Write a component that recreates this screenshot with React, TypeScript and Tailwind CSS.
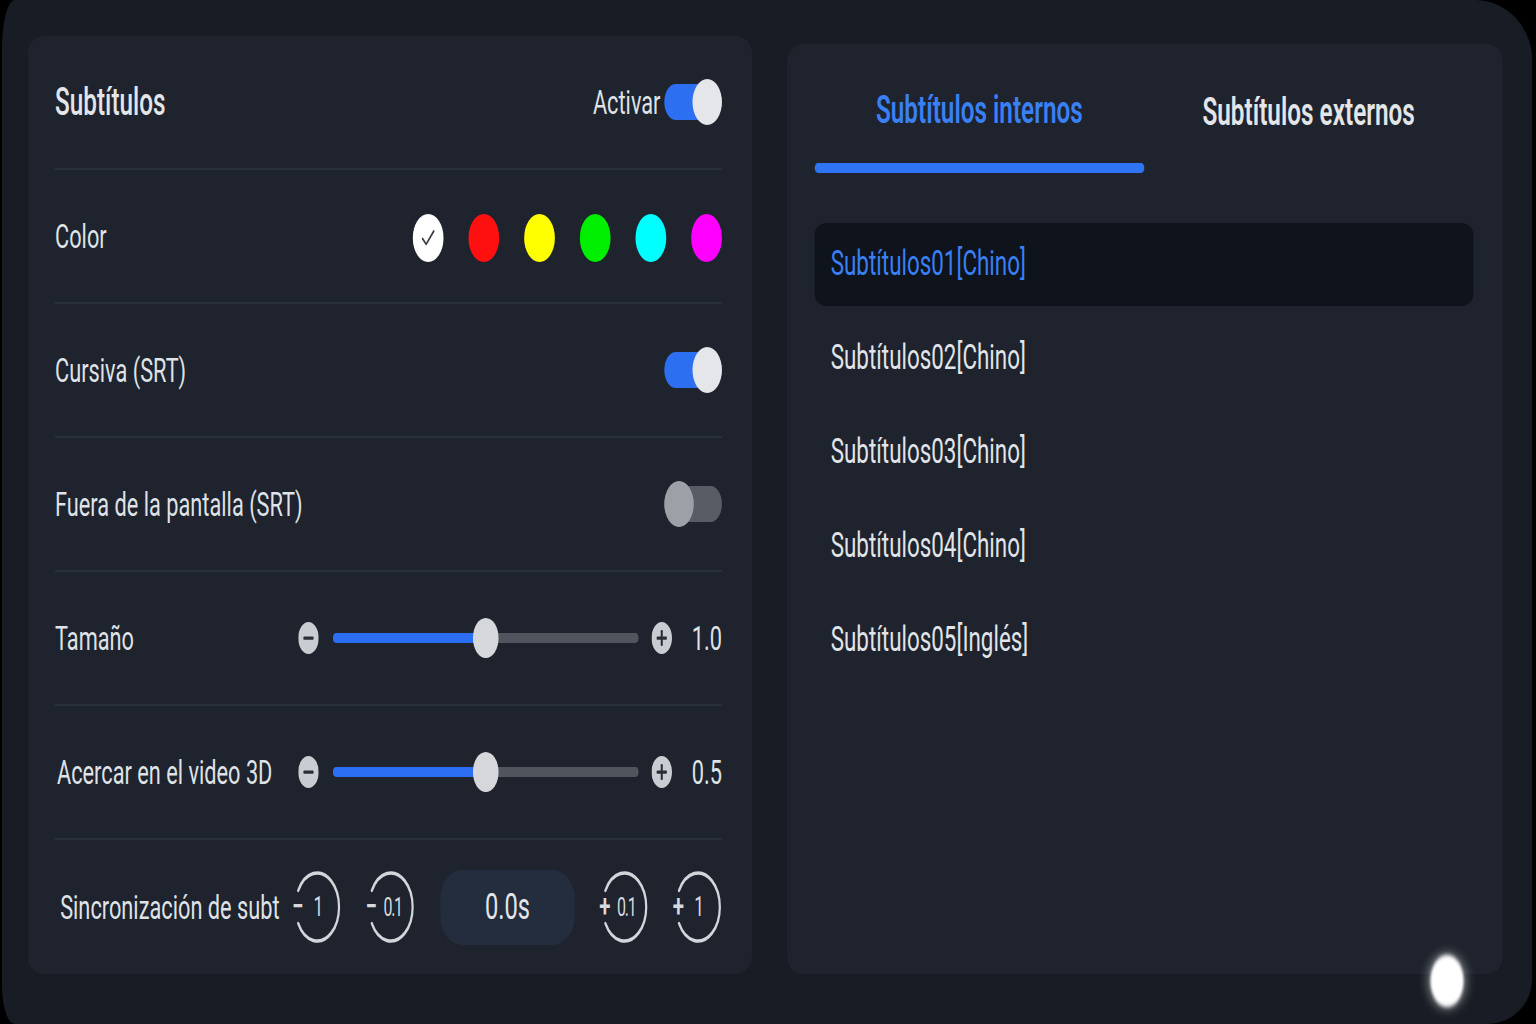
import React from "react";

// The reference is a stereo (VR) capture squeezed horizontally to ~64%.
// The page is laid out at 2400px wide and scaled on the x axis to fit 1536px.

const Toggle: React.FC<{ on: boolean }> = ({ on }) => {
  return (
    <div className="relative w-[90px] h-[46px] flex items-center">
      <div
        className={
          on
            ? "w-full h-[36px] rounded-full bg-[#2c6ff0]"
            : "w-full h-[36px] rounded-full bg-[#585c64]"
        }
      />
      <div
        className={
          on
            ? "absolute right-0 top-0 w-[46px] h-[46px] rounded-full bg-[#e4e6ea]"
            : "absolute left-0 top-0 w-[46px] h-[46px] rounded-full bg-[#9da1a7]"
        }
      />
    </div>
  );
};

const RoundIcon: React.FC<{ plus?: boolean }> = ({ plus }) => {
  return (
    <svg width="32" height="32" viewBox="0 0 32 32">
      <circle cx="16" cy="16" r="16" fill="#c9ccd1" />
      <rect x="8" y="14.5" width="16" height="3.2" rx="1.2" fill="#2a2e36" />
      {plus && <rect x="14.4" y="8" width="3.2" height="16" rx="1.2" fill="#2a2e36" />}
    </svg>
  );
};

const Slider: React.FC<{ value: string }> = ({ value }) => {
  return (
    <div className="flex items-center">
      <RoundIcon />
      <div className="relative ml-[22px] w-[478px] h-[40px] flex items-center">
        <div className="flex w-full h-[10px] rounded-full overflow-hidden">
          <div className="w-[239px] bg-[#2b6ef2]" />
          <div className="flex-1 bg-[#50545c]" />
        </div>
        <div className="absolute left-[219px] top-0 w-[40px] h-[40px] rounded-full bg-[#d5d7db]" />
      </div>
      <div className="ml-[20px]">
        <RoundIcon plus />
      </div>
      <span className="ml-[31px] text-[34px] text-[#dfe2e6] leading-none">{value}</span>
    </div>
  );
};

const StepButton: React.FC<{ sign: string; num: string }> = ({ sign, num }) => {
  const small = num.length > 1;
  return (
    <button className="relative w-[75px] h-[74px] flex items-center justify-center text-[#d6d9de]">
      <svg className="absolute inset-0" width="75" height="74" viewBox="0 0 74 74">
        <path
          d="M7.5 20.5 A34 34 0 1 1 7.5 53.5"
          fill="none"
          stroke="#d2d5da"
          strokeWidth="3.5"
          strokeLinecap="round"
        />
      </svg>
      <span className="absolute left-[-4px] top-[19px] w-[22px] text-center text-[32px] leading-[34px] font-semibold">
        {sign}
      </span>
      <span
        className={
          small
            ? "relative ml-[6px] text-[25px] leading-none tracking-[-2px]"
            : "relative ml-[4px] text-[27px] leading-none"
        }
      >
        {num}
      </span>
    </button>
  );
};

const colors = ["#ffffff", "#ff1010", "#ffff00", "#00ee00", "#00ffff", "#ff00ff"];

const subtitles = [
  "Subtítulos01[Chino]",
  "Subtítulos02[Chino]",
  "Subtítulos03[Chino]",
  "Subtítulos04[Chino]",
  "Subtítulos05[Inglés]",
];

const Row: React.FC<{ children: React.ReactNode; last?: boolean }> = ({ children, last }) => {
  return (
    <div
      className={
        last
          ? "flex items-center justify-between h-[134px]"
          : "flex items-center justify-between h-[134px] border-b-2 border-[#2a303b]"
      }
    >
      {children}
    </div>
  );
};

const App: React.FC = () => {
  return (
    <div className="w-[1536px] h-[1024px] overflow-hidden bg-black font-['Roboto','Noto_Sans',sans-serif]">
      <div className="w-[2400px] h-[1024px] origin-top-left scale-x-[0.64]">
        <div className="relative ml-[3px] w-[2391px] h-[1024px] bg-[#181c24] rounded-tl-[20px_50px] rounded-tr-[90px_60px] rounded-br-[70px_45px] rounded-bl-[20px_40px] flex items-start gap-[55px] pl-[41px] pt-[36px]">
          {/* left settings panel */}
          <div className="w-[1131px] h-[938px] rounded-[26px/16px] bg-[#1e232d] pl-[42px] pr-[47px]">
            <Row>
              <span className="text-[38px] font-medium text-[#e3e5e9]">Subtítulos</span>
              <div className="flex items-center gap-[6px]">
                <span className="text-[34px] text-[#dfe2e6]">Activar</span>
                <Toggle on />
              </div>
            </Row>
            <Row>
              <span className="text-[34px] text-[#dfe2e6]">Color</span>
              <div className="flex items-center gap-[39px] pt-[3px]">
                {colors.map((c, i) => (
                  <div
                    key={c}
                    className="w-[48px] h-[48px] rounded-full flex items-center justify-center"
                    style={{ backgroundColor: c }}
                  >
                    {i === 0 && (
                      <svg width="30" height="30" viewBox="0 0 24 24" fill="none">
                        <path d="M5 12.5l4.5 4.5L19 6.5" stroke="#3a3f48" strokeWidth="1.8" strokeLinecap="round" strokeLinejoin="round" />
                      </svg>
                    )}
                  </div>
                ))}
              </div>
            </Row>
            <Row>
              <span className="text-[34px] text-[#dfe2e6]">Cursiva (SRT)</span>
              <Toggle on />
            </Row>
            <Row>
              <span className="text-[34px] text-[#dfe2e6]">Fuera de la pantalla (SRT)</span>
              <Toggle on={false} />
            </Row>
            <Row>
              <span className="text-[34px] text-[#dfe2e6]">Tamaño</span>
              <Slider value="1.0" />
            </Row>
            <Row>
              <span className="text-[34px] text-[#dfe2e6] pl-[3px]">Acercar en el video 3D</span>
              <Slider value="0.5" />
            </Row>
            <Row last>
              <span className="text-[34px] text-[#dfe2e6] whitespace-nowrap pl-[8px]">Sincronización de subt</span>
              <div className="flex items-center gap-[40px]">
                <StepButton sign="−" num="1" />
                <StepButton sign="−" num="0.1" />
                <div className="w-[210px] h-[75px] rounded-[34px/28px] bg-[#232d3d] flex items-center justify-center text-[37px] text-[#e3e5e9]">
                  0.0s
                </div>
                <StepButton sign="+" num="0.1" />
                <StepButton sign="+" num="1" />
              </div>
            </Row>
          </div>

          {/* right subtitle list panel */}
          <div className="mt-[8px] w-[1118px] h-[930px] rounded-[26px/16px] bg-[#1e232d] pl-[43px] pr-[46px] pt-[40px]">
            <div className="flex">
              <div className="flex-1 flex flex-col items-center">
                <span className="leading-[52px] text-[38px] font-semibold text-[#3a80f5]">Subtítulos internos</span>
                <div className="mt-[27px] w-full h-[10px] rounded-full bg-[#2f74f2]" />
              </div>
              <div className="flex-1 flex flex-col items-center">
                <span className="leading-[52px] text-[38px] font-semibold text-[#e3e5e9] pt-[2px]">Subtítulos externos</span>
              </div>
            </div>
            <div className="mt-[50px] flex flex-col gap-[11px]">
              {subtitles.map((s, i) => (
                <div
                  key={s}
                  className={
                    i === 0
                      ? "h-[83px] rounded-[18px/12px] bg-[#0e131c] flex items-center pl-[25px] text-[35px] text-[#3a80f5]"
                      : "h-[83px] flex items-center pl-[25px] text-[35px] text-[#e1e4e8]"
                  }
                >
                  {s}
                </div>
              ))}
            </div>
          </div>

          {/* pointer dot */}
          <div className="absolute left-[2232px] top-[955px] w-[52px] h-[52px] rounded-full bg-white blur-[2px] shadow-[0_0_14px_rgba(255,255,255,0.7)]" />
        </div>
      </div>
    </div>
  );
};

export default App;
